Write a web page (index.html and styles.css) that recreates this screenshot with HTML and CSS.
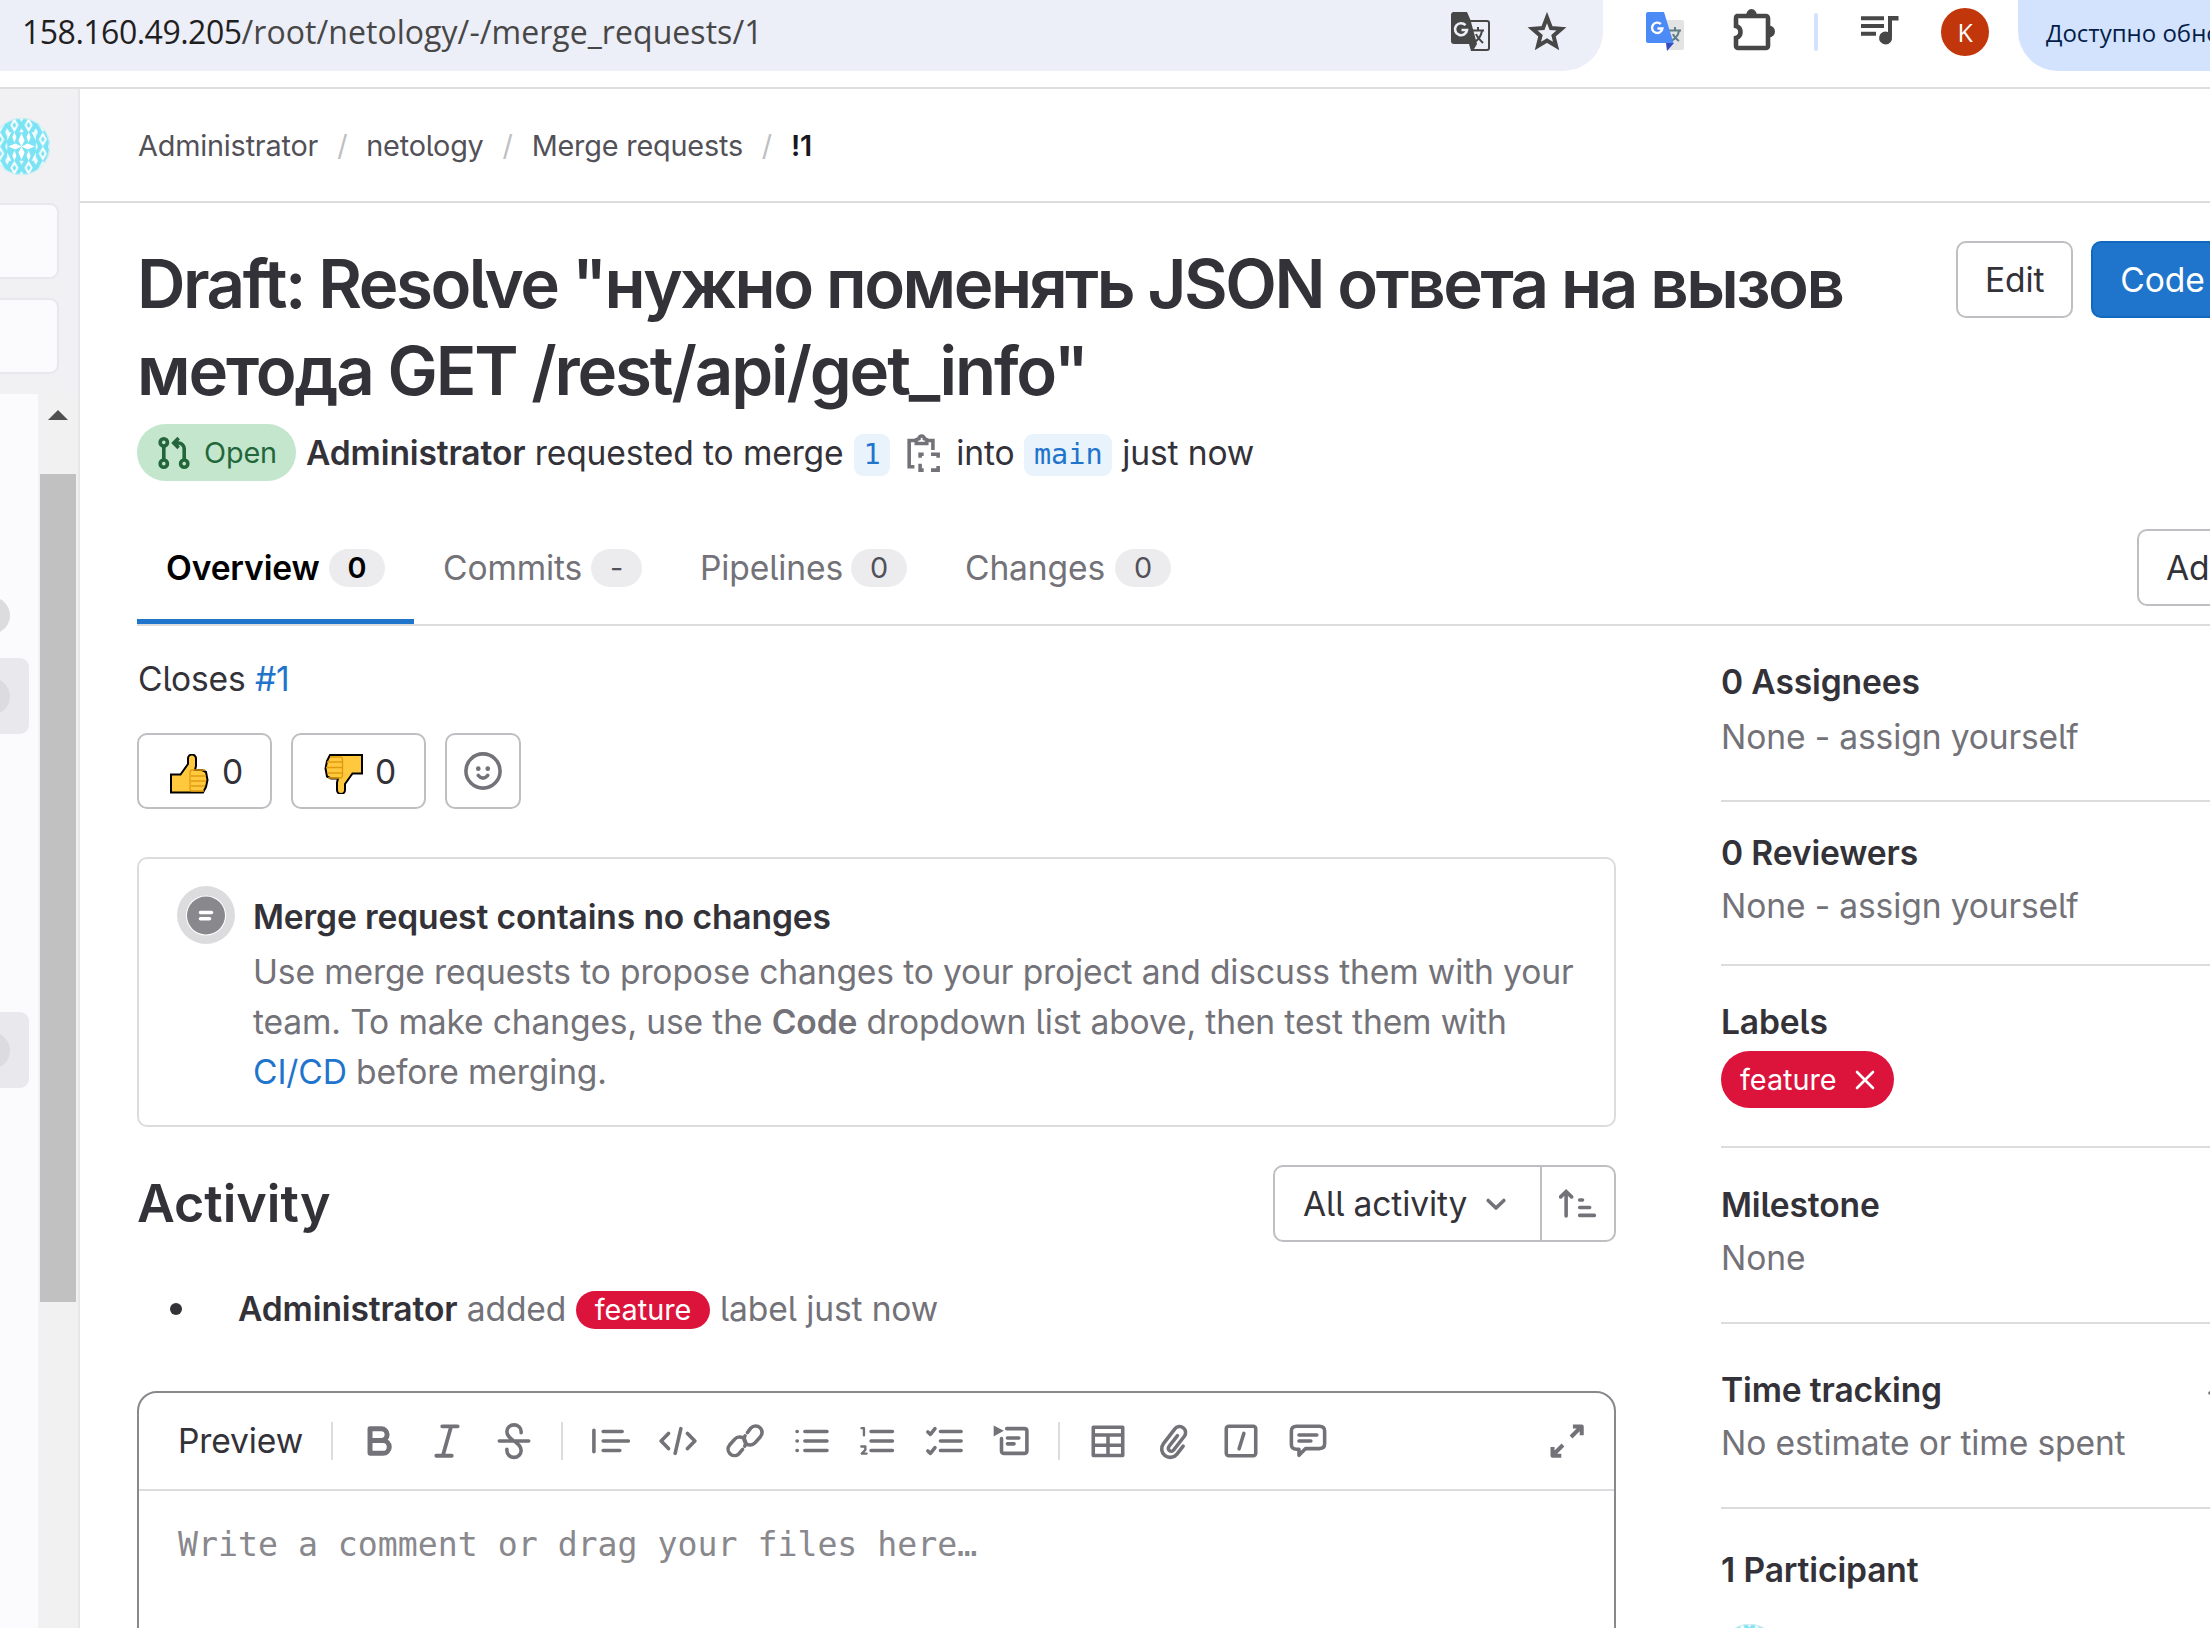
FILE: index.html
```html
<!DOCTYPE html>
<html lang="en">
<head>
<meta charset="utf-8">
<title>Merge request !1</title>
<link rel="stylesheet" href="styles.css">
</head>
<body>
<svg width="0" height="0" class="defs" aria-hidden="true">
  <defs>
    <pattern id="tile" width="14" height="14" patternUnits="userSpaceOnUse">
      <rect width="14" height="14" fill="#7be3f4"/>
      <path d="M7 0l4 7-4 7-4-7z" fill="#fff"/>
      <path d="M7 4l2 3-2 3-2-3z" fill="#7be3f4"/>
      <path d="M0 0h2L0 4zM14 0h-2l2 4zM0 14h2l-2-4zM14 14h-2l2-4z" fill="#fff"/>
    </pattern>
    <symbol id="identicon" viewBox="0 0 56 56">
      <circle cx="28" cy="28" r="28" fill="url(#tile)"/>
      <path d="M14 14h28v28H14z" fill="#7be3f4"/>
      <path d="M28 28l-3-6 3-7 3 7zM28 28l-3 6 3 7 3-7zM28 28l-6-3-7 3 7 3zM28 28l6-3 7 3-7 3zM21 14l2 5-2 5-2-5zM35 14l2 5-2 5-2-5zM21 32l2 5-2 5-2-5zM35 32l2 5-2 5-2-5zM14 14h4l-4 8zM42 14h-4l4 8zM14 42h4l-4-8zM42 42h-4l4-8z" fill="#fff"/>
      <circle cx="28" cy="28" r="27.5" fill="none" stroke="#d5eef3"/>
    </symbol>
  </defs>
</svg>

<header class="chrome">
  <div class="omnibox">
    <span class="url"><b>158.160.49.205</b>/root/netology/-/merge_requests/1</span>
    <svg class="c-translate" width="40" height="40" viewBox="0 0 40 40"><path d="M2 0h14l3.500 8H36a3 3 0 0 1 3 3v25a3 3 0 0 1-3 3H20l-2-7H3a3 3 0 0 1-3-3V3a3 3 0 0 1 2-3z" fill="#474747"/><path d="M20 10h16a1 1 0 0 1 1 1v25a1 1 0 0 1-1 1H23l3-5z" fill="#eceef8"/><path d="M22 18.500h11M27 15v3.500M31 19c-1 5-4 9-7.500 11M25 22c1 3 4 6 7 9" stroke="#474747" stroke-width="2" fill="none"/><path d="M14.500 13.200A6 6 0 1 0 16 18h-5.500" stroke="#eceef8" stroke-width="2.600" fill="none"/></svg>
    <svg class="c-star" width="40" height="38" viewBox="0 0 40 38"><path d="M20 5.500l4 10.500 10.500.8-8 7 2.600 10.200L20 28.500 10.900 34l2.600-10.200-8-7L16 16z" fill="none" stroke="#474747" stroke-width="4"/></svg>
  </div>
  <svg class="c-gt" width="40" height="40" viewBox="0 0 40 40"><path d="M14 8h22a2 2 0 0 1 2 2v26a2 2 0 0 1-2 2H22z" fill="#e3e3e3"/><path d="M23 18.500h12M29 15v3.500M33 19c-1 5-4 8-8 10M27 22c1 3 3 5 6 7" stroke="#607d88" stroke-width="2" fill="none"/><path d="M20 31h8l-7 8z" fill="#3a4bc0"/><path d="M2 0h16l9.500 31H2a2 2 0 0 1-2-2V2a2 2 0 0 1 2-2z" fill="#4c8bf5"/><path d="M14.800 12A5.200 5.200 0 1 0 16.400 16.500H11.500" stroke="#fff" stroke-width="2.400" fill="none"/></svg>
  <svg class="c-ext" width="42" height="42" viewBox="0 0 42 42"><path d="M4 7h29a2 2 0 0 1 2 2v28a2 2 0 0 1-2 2H5a2 2 0 0 1-2-2v-8c3-1 4.500-3 4.500-6S6 18 3 17V9a2 2 0 0 1 1-2z" fill="none" stroke="#474747" stroke-width="4.600"/><path d="M13 7a5.500 7 0 0 1 11 0zM36 16.500a5.500 5.500 0 0 1 0 12z" fill="#474747"/></svg>
  <i class="c-sep"></i>
  <svg class="c-media" width="38" height="30" viewBox="0 0 38 30"><path d="M0 2.200h23M0 10h23M0 17.700h15" stroke="#474747" stroke-width="4"/><path d="M27 0h10.500v4.600H31V21a6.500 6.500 0 1 1-4-5z" fill="#474747"/></svg>
  <span class="c-user">K</span>
  <span class="c-update">Доступно обновление</span>
</header>

<div class="app">
  <aside class="rail">
    <svg class="rail-avatar" width="57" height="57"><use href="#identicon"/></svg>
    <div class="rail-box"></div>
    <div class="rail-box"></div>
    <div class="rail-body">
      <div class="rail-nav">
        <div class="rail-item"><i></i></div>
        <div class="rail-item on"><i></i></div>
        <div class="rail-item on far"><i></i></div>
      </div>
      <div class="scroll"><i class="up"></i><i class="thumb"></i></div>
    </div>
  </aside>

  <main class="page">
    <nav class="crumbs"><span>Administrator</span><i>/</i><span>netology</span><i>/</i><span>Merge requests</span><i>/</i><b>!1</b></nav>

    <div class="head">
      <h1>Draft: Resolve "нужно поменять JSON ответа на вызов<br><span class="t-second">метода GET /rest/api/get_info"</span></h1>
      <div class="head-actions"><span class="btn">Edit</span><span class="btn primary">Code</span></div>
    </div>

    <div class="meta">
      <span class="badge-open">
        <svg width="34" height="34" viewBox="0 0 16 16" fill="none" stroke="#24663b" stroke-width="1.700"><circle cx="3.200" cy="3" r="1.700"/><circle cx="3.200" cy="13" r="1.700"/><circle cx="12.800" cy="13" r="1.700"/><path d="M3.200 4.700v6.600M12.800 11.300V6a2.700 2.700 0 0 0-2.700-2.700H8.500M10.200 1L7.900 3.300l2.300 2.300"/></svg>
        Open</span>
      <span class="meta-text"><b>Administrator</b> requested to merge</span>
      <code class="chip">1</code>
      <svg class="copy" width="38" height="38" viewBox="0 0 16 16" fill="none" stroke="#737278" stroke-width="1.500"><path d="M4.800 13.800H2.600V2.700h2.500M9.500 2.700h3.100v4M5.600 4V2.400l1.100-.4a1.100 1.100 0 0 1 2.300 0l1 .4V4z"/><path d="M7.200 10V8.500h1.500M11.800 8.500h3V10M7.200 12.500v2.700h1.500M11.800 15.200h3v-1.700"/></svg>
      <span class="into">into</span>
      <code class="chip">main</code>
      <span class="when">just now</span>
    </div>

    <div class="tabs">
      <div class="tab w1 active"><span>Overview</span><em>0</em></div>
      <div class="tab w2"><span>Commits</span><em>-</em></div>
      <div class="tab w3"><span>Pipelines</span><em>0</em></div>
      <div class="tab w4"><span>Changes</span><em>0</em></div>
      <span class="btn add">Add a to do</span>
    </div>

    <div class="cols">
      <section class="main">
        <p class="closes">Closes <a>#1</a></p>
        <div class="reacts">
          <span class="btn react"><svg width="40" height="40" viewBox="0 0 40 40"><path d="M1 20.500h9.500L18 10V4.500a3.500 3.500 0 0 1 8 0V12l-1 4h7l4 2 1.500 8-1.500 7-3 5.500H1z" fill="#ffc83d" stroke="#000" stroke-width="2" /><path d="M35 16h-13q-2 0-2 3v15q0 3 2 3h12M21 22h15M21 27h15M21 32h14" fill="none" stroke="#e09a10" stroke-width="1.300"/></svg>0</span>
          <span class="btn react second"><svg width="40" height="40" viewBox="0 0 40 40"><path d="M39 1v18.500h-9.500L22 30v6a3.500 3.500 0 0 1-8 0v-7.500l1-4H8l-4-2-1.500-8L4 7l3-6z" fill="#ffc83d" stroke="#000" stroke-width="2"/><path d="M5 24h12q2.500 0 2.500-3V6q0-3-2-3H7M4 8h15M3 13.500h16M4 19h15" fill="none" stroke="#e09a10" stroke-width="1.300"/></svg>0</span>
          <span class="btn smile"><svg width="38" height="38" viewBox="0 0 16 16" fill="none" stroke="#737278" stroke-width="1.500"><circle cx="8" cy="8" r="7.200"/><circle cx="6" cy="7" r="1" fill="#737278" stroke="none"/><circle cx="10" cy="7" r="1" fill="#737278" stroke="none"/><path d="M6 9.800q2 2.400 4 0" stroke-linecap="round"/></svg></span>
        </div>

        <div class="card">
          <span class="status"><svg width="58" height="58" viewBox="0 0 58 58"><circle cx="29" cy="29" r="29" fill="#dcdcde"/><circle cx="29" cy="29.500" r="20" fill="#fff"/><circle cx="29" cy="29.500" r="19" fill="#89888d"/><path d="M23.500 26.500h11M23.500 32.700h9" stroke="#fff" stroke-width="3.600" stroke-linecap="round"/></svg></span>
          <div class="card-body">
            <h2>Merge request contains no changes</h2>
            <p>Use merge requests to propose changes to your project and discuss them with your<br>team. To make changes, use the <b>Code</b> dropdown list above, then test them with<br><a>CI/CD</a> before merging.</p>
          </div>
        </div>

        <div class="activity">
          <h2>Activity</h2>
          <div class="group">
            <span class="all">All activity <svg width="38" height="38" viewBox="0 0 16 16" fill="none" stroke="#737278" stroke-width="1.500" stroke-linecap="round" stroke-linejoin="round"><path d="M4.700 6.500L8 9.700l3.300-3.200"/></svg></span>
            <span class="sort"><svg width="38" height="38" viewBox="0 0 16 16" fill="none" stroke="#737278" stroke-width="1.500" stroke-linecap="round"><path d="M3 13V3M.7 5L3 2.700 5.300 5M8.700 6.300h1.200M8.700 9.500h4.200M8.700 12.800h6.200"/></svg></span>
          </div>
        </div>

        <div class="note"><i class="dot"></i><span class="who"><b>Administrator</b> added</span><span class="pill sm">feature</span><span class="after">label just now</span></div>

        <div class="editor">
          <div class="toolbar">
            <span class="preview">Preview</span><i class="vr"></i>
            <svg class="ic first" viewBox="0 0 16 16"><path d="M3.800 2.800h4.700a2.500 2.500 0 0 1 0 5H3.800zM3.800 7.800h5.400a2.700 2.700 0 0 1 0 5.400H3.800z" stroke-width="2.100"/></svg>
            <svg class="ic" viewBox="0 0 16 16"><path d="M6 1.800h6.500M3.500 14.200H10M9.700 2L6.300 14" stroke-width="1.600"/></svg>
            <svg class="ic" viewBox="0 0 16 16"><path d="M1.800 8h12.400M11 4.500V4a3 2.800 0 0 0-6 0c0 2 1.500 2.900 3 4s3 2 3 4a3 2.900 0 0 1-6 0v-.5"/></svg>
            <i class="vr second"></i>
            <svg class="ic q" viewBox="0 0 16 16"><path d="M.8 3.500v9M4.700 4h8M4.700 8h10.600M4.700 12h7"/></svg>
            <svg class="ic" viewBox="0 0 16 16"><path d="M4 4.800L.9 8 4 11.200M12 4.800L15.100 8 12 11.200M9.200 2.800L6.800 13.200"/></svg>
            <svg class="ic" viewBox="0 0 16 16"><path d="M7 11.500l-1.700 2a2.700 2.700 0 0 1-3.800-3.800L3.700 7.200a2.700 2.700 0 0 1 4.200.3q.8 1.300 0 2.700M9 4.500l1.500-2a2.700 2.700 0 0 1 3.900 3.800L12.200 8.800A2.700 2.700 0 0 1 8 8.500q-.8-1.300 0-2.700"/></svg>
            <svg class="ic" viewBox="0 0 16 16"><path d="M1.700 4h.1M1.700 8h.1M1.700 12h.1M5 4h9.300M5 8h9.300M5 12h9.300"/></svg>
            <svg class="ic n1" viewBox="0 0 16 16"><path d="M5.500 4h9M5.500 8h9M5.500 12h9"/><path d="M1.500 2.600h1v3M1.400 10.300h1.700v1.400L1.600 13.300h2" stroke-width="1"/></svg>
            <svg class="ic n2" viewBox="0 0 16 16"><path d="M6.500 4h8.700M6.500 8h8.700M6.500 12h8.700M1.200 4.200l1.100 1L4.200 2.800M1.200 12.200l1.100 1 1.900-2.400"/></svg>
            <svg class="ic" viewBox="0 0 16 16"><path d="M6.200 2.800h7.300q1.200 0 1.200 1v8.400q0 1-1.200 1h-8.300q-1.200 0-1.200-1V7M6.500 6.700h4.800M6.500 9.200h2.800"/><path d="M.7 1.500v4.600L5 3.700z" fill="#737278" stroke="none"/></svg>
            <i class="vr third"></i>
            <svg class="ic t" viewBox="0 0 16 16"><path d="M1.800 2.200h12.400v11.900H1.800zM1.800 5.500h12.400M1.800 9.800h12.400M8 5.500V14"/></svg>
            <svg class="ic clip" viewBox="0 0 16 16"><path d="M12.700 10.200l-2.600 3.300a3.600 3.600 0 0 1-5.700-4.400l4.800-6.200a2.500 2.500 0 0 1 4 3.100L8.700 11.800a1.200 1.200 0 0 1-2-1.500l3.600-4.600"/></svg>
            <svg class="ic" viewBox="0 0 16 16"><rect x="1.800" y="1.800" width="12.400" height="12.400" rx="1"/><path d="M9.200 4.800l-2 6.500"/></svg>
            <svg class="ic" viewBox="0 0 16 16"><path d="M3.200 1.800h9.600q2.200 0 2.200 2v5.400q0 2-2.200 2H7L4.200 14v-2.500h-1q-2.200 0-2.200-2V3.800q0-2 2.200-2zM4.200 5.500h7.500M4.200 8h5"/></svg>
            <svg class="ic full" viewBox="0 0 16 16"><path d="M9.700 6.300L14 2M10.500 1.900h3.700v3.700M6.300 9.700L2 14M1.900 10.500v3.700h3.700" stroke-linecap="butt" stroke-width="1.700"/></svg>
          </div>
          <div class="ta">Write a comment or drag your files here…</div>
        </div>
      </section>

      <aside class="side">
        <div class="blk b1"><h3>0 Assignees</h3><p>None - assign yourself</p></div>
        <div class="blk b2"><h3>0 Reviewers</h3><p>None - assign yourself</p></div>
        <div class="blk b3"><h3>Labels</h3><span class="pill">feature<svg width="20" height="20" viewBox="0 0 20 20"><path d="M2 2l16 16M18 2L2 18" stroke="#fff" stroke-width="2.600" stroke-linecap="round"/></svg></span></div>
        <div class="blk b4"><h3>Milestone</h3><p>None</p></div>
        <div class="blk b5"><h3>Time tracking<svg width="28" height="28" viewBox="0 0 28 28"><path d="M2 14h24M14 2v24" stroke="#737278" stroke-width="3.600" stroke-linecap="round"/></svg></h3><p>No estimate or time spent</p></div>
        <div class="blk b6"><h3>1 Participant</h3><svg class="part" width="57" height="57"><use href="#identicon"/></svg></div>
      </aside>
    </div>
  </main>
</div>
</body>
</html>
```
FILE: styles.css
```css
* { box-sizing: border-box; }
html, body { margin: 0; height: 1628px; overflow: hidden; }
body {
  width: 2210px;
  background: #fff;
  color: #333238;
  font: 33.6px/50px Inter, "Noto Sans", sans-serif;
  letter-spacing: -0.130px;
  font-feature-settings: "cv05" 1;
}
h1, h2, h3, p { margin: 0; font-weight: 600; }
p { font-weight: 400; }
b { font-weight: 600; }
a { color: #1f75cb; }
i, em { font-style: normal; }
svg { flex: none; display: block; }
.defs { position: absolute; }

/* browser bar */
.chrome {
  display: flex;
  height: 89px;
  border-bottom: 2px solid #dfdfdf;
  overflow: hidden;
  font-family: "Open Sans", "Noto Sans", sans-serif;
}
.omnibox {
  flex: none;
  width: 1603px;
  height: 71px;
  padding-left: 22px;
  background: #eceef8;
  border-radius: 0 0 40px 0 / 0 0 39px 0;
  display: flex;
}
.url { width: 1429px; color: #474747; line-height: 63px; font-size: 32px; letter-spacing: 0.050px; white-space: nowrap; }
.url b { font-weight: 400; color: #1f1f1f; letter-spacing: -0.500px; }
.c-translate { margin-top: 12px; }
.c-star { margin: 12px 0 0 36px; }
.c-gt { margin: 12px 0 0 43px; }
.c-ext { margin: 9px 0 0 47px; }
.c-sep { flex: none; width: 4px; height: 38px; margin: 13px 0 0 39px; border-radius: 2px; background: #d3e3fd; }
.c-media { margin: 16px 0 0 43px; }
.c-user {
  flex: none;
  width: 48px;
  height: 48px;
  margin: 8px 0 0 42px;
  border-radius: 50%;
  background: #c2360c;
  color: #fff;
  font-size: 25px;
  line-height: 48px;
  text-align: center;
}
.c-update {
  flex: none;
  height: 71px;
  width: 420px;
  margin-left: 29px;
  padding-left: 28px;
  border-radius: 0 0 0 40px;
  background: #d3e3fd;
  color: #041e49;
  font-weight: 500;
  font-size: 24px;
  letter-spacing: 0;
  line-height: 65px;
  white-space: nowrap;
}

.app { display: flex; height: 1539px; }

/* left rail */
.rail { flex: none; width: 80px; background: #f1f1f4; border-right: 2px solid #e7e6eb; overflow: hidden; }
.rail-avatar { margin: 29px 0 28px -7px; }
.rail-box { width: 61px; height: 76px; margin: 0 0 19px -2px; background: #fbfafd; border: 2px solid #e8e8ec; border-radius: 0 9px 9px 0; }
.rail-body { display: flex; height: 1240px; margin-top: 20px; }
.rail-nav { width: 38px; background: #fbfafd; }
.rail-item { width: 29px; height: 76px; margin-bottom: 5px; display: flex; align-items: center; border-radius: 0 9px 9px 0; }
.rail-item:first-child { margin-top: 183px; }
.rail-item i { flex: none; width: 37px; height: 37px; margin-left: -27px; border-radius: 50%; background: #dcdcde; }
.rail-item.on { background: #e9e8ed; }
.rail-item.far { margin-top: 278px; }
.scroll { width: 40px; background: #f1f1f1; display: flex; flex-direction: column; align-items: center; }
.scroll .up { margin-top: 16px; border: 10px solid transparent; border-top: 0; border-bottom: 10px solid #505050; }
.scroll .thumb { width: 36px; height: 828px; margin-top: 54px; background: #c1c1c1; }

/* page */
.page { flex: none; width: 2130px; overflow: hidden; }
.crumbs {
  display: flex;
  height: 114px;
  padding: 2px 0 0 58px;
  border-bottom: 2px solid #dcdcde;
  align-items: center;
  font-size: 28.8px;
  letter-spacing: -0.180px;
  color: #535158;
}
.crumbs i { width: 48px; text-align: center; color: #bfbfc3; }
.crumbs b { color: #18171d; }
.head { display: flex; justify-content: space-between; padding: 37px 0 0 57px; height: 221px; }
h1 { font-size: 67.2px; line-height: 87.360px; letter-spacing: -2.500px; white-space: nowrap; }
.t-second { letter-spacing: -2.150px; }
.head-actions { display: flex; gap: 18px; width: 254px; margin-top: 1px; }
.btn {
  flex: none;
  height: 77px;
  padding: 0 27px;
  border: 2px solid #bfbfc3;
  border-radius: 10px;
  background: #fff;
  line-height: 73px;
  white-space: nowrap;
}
.btn.primary { background: #1f75cb; border-color: #1068bf; color: #fff; width: 180px; }
.meta { display: flex; align-items: center; height: 57px; padding-left: 57px; white-space: nowrap; }
.badge-open {
  width: 159px;
  height: 57px;
  padding-left: 20px;
  border-radius: 29px;
  display: flex;
  align-items: center;
  gap: 13px;
  background: #c3e6cd;
  color: #24663b;
  font-size: 28.8px;
}
.meta-text { margin-left: 10px; width: 548px; padding-top: 1px; }
.chip {
  height: 42px;
  margin-top: 4px;
  padding: 0 9.600px;
  border-radius: 9px;
  background: #e9f3fc;
  color: #1f75cb;
  letter-spacing: 0;
  font: 28.5px/42px "DejaVu Sans Mono", "Liberation Mono", monospace;
}
.copy { margin-left: 13px; }
.into { margin-left: 15px; width: 68px; padding-top: 1px; }
.when { margin-left: 10px; padding-top: 1px; }
.tabs { display: flex; height: 116px; margin: 29px 0 0 57px; border-bottom: 2px solid #dcdcde; align-items: center; }
.tab { display: flex; height: 114px; padding: 2px 29px 0; justify-content: space-between; align-items: center; color: #737278; }
.tab em { width: 56px; height: 38px; text-align: center; border-radius: 19px; background: #ececef; color: #535158; font-size: 28.8px; line-height: 38px; }
.tab.active { color: #000; font-weight: 600; box-shadow: inset 0 -5px #1f75cb; }
.tab.active em { color: #000; }
.w1 { width: 277px; }
.w2 { width: 257px; }
.w2 em { width: 51px; }
.w3 { width: 265px; }
.w4 { width: 264px; }
.btn.add { margin-left: auto; margin-right: -170px; width: 243px; }

.cols { display: flex; padding-left: 57px; }
.main { flex: none; width: 1479px; }
.closes { margin-top: 28px; padding-left: 1px; }
.reacts { display: flex; gap: 19px; margin-top: 29px; }
.react { width: 135px; display: flex; align-items: center; gap: 12px; padding: 0 0 0 31px; line-height: 71px; height: 76px; }
.react svg { margin-top: 6px; }
.react.second { padding-left: 30px; }
.smile { width: 76px; height: 76px; padding: 0; display: flex; align-items: center; justify-content: center; }
.card { display: flex; height: 270px; margin-top: 48px; padding: 27px 0 0 38px; border: 2px solid #dcdcde; border-radius: 10px; }
.card-body { margin: 6px 0 0 18px; white-space: nowrap; }
.card h2 { font-size: 33.6px; line-height: 50px; }
.card p { margin-top: 5px; color: #737278; }
.activity { display: flex; justify-content: space-between; align-items: center; height: 77px; margin-top: 38px; }
.activity h2 { font-size: 52px; letter-spacing: 0; }
.group { display: flex; width: 343px; height: 77px; border: 2px solid #bfbfc3; border-radius: 10px; }
.all { width: 267px; padding-left: 28px; line-height: 73px; display: flex; align-items: center; gap: 10px; border-right: 2px solid #bfbfc3; white-space: nowrap; }
.sort { display: flex; flex: 1; align-items: center; justify-content: center; }
.note { display: flex; align-items: center; height: 50px; margin-top: 42px; color: #737278; white-space: nowrap; }
.note b { color: #333238; }
.dot { width: 12px; height: 12px; margin: 0 56px 0 33px; border-radius: 50%; background: #333238; }
.who { width: 338px; }
.pill { display: flex; align-items: center; background: #dc143c; color: #fff; font-size: 28.8px; letter-spacing: 0; border-radius: 29px; width: 173px; height: 57px; padding-left: 19px; gap: 18px; }
.pill.sm { width: 134px; height: 38px; margin-top: 2px; padding: 0; justify-content: center; }
.after { margin-left: 10px; }
.editor { height: 300px; margin-top: 57px; border: 2px solid #89888d; border-radius: 20px; }
.toolbar { display: flex; align-items: center; height: 98px; border-bottom: 2px solid #dcdcde; padding-left: 39px; }
.preview { width: 153px; }
.vr { flex: none; width: 2px; height: 38px; background: #dcdcde; }
.ic { width: 38px; height: 38px; margin-right: 29px; fill: none; stroke: #737278; stroke-width: 1.500; stroke-linecap: round; stroke-linejoin: round; }
.ic.first { margin-left: 28px; }
.vr.second { margin: 0 29px 0 -1px; }
.ic.n1 { margin-left: -2px; }
.ic.n2 { margin-left: 0; }
.vr.third { margin: 0 29px 0 -1px; }
.ic.clip { margin-left: -3px; margin-right: 31px; }
.ic.full { margin: 0 28px 0 auto; }
.ta { padding: 29px 0 0 39px; color: #89888d; letter-spacing: 0; font: 33.2px/50px "DejaVu Sans Mono", "Liberation Mono", monospace; white-space: nowrap; }

.side { flex: none; width: 489px; margin-left: 105px; white-space: nowrap; }
.blk { border-bottom: 2px solid #dcdcde; }
.blk h3 { font-size: 33.6px; line-height: 50px; }
.blk p { margin-top: 3px; color: #737278; }
.b1 { height: 176px; padding-top: 31px; }
.b1 p { margin-top: 5px; }
.b2 { height: 164px; padding-top: 26px; }
.b3 { height: 182px; padding-top: 31px; }
.b3 .pill { margin-top: 4px; }
.b4 { height: 176px; padding-top: 32px; }
.b5 { height: 185px; padding-top: 41px; }
.b5 h3 { display: flex; align-items: center; justify-content: space-between; margin-right: -26px; }
.b5 h3 svg { margin-top: 6px; }
.b6 { padding-top: 36px; border: 0; }
.part { margin-top: 29px; }
```
